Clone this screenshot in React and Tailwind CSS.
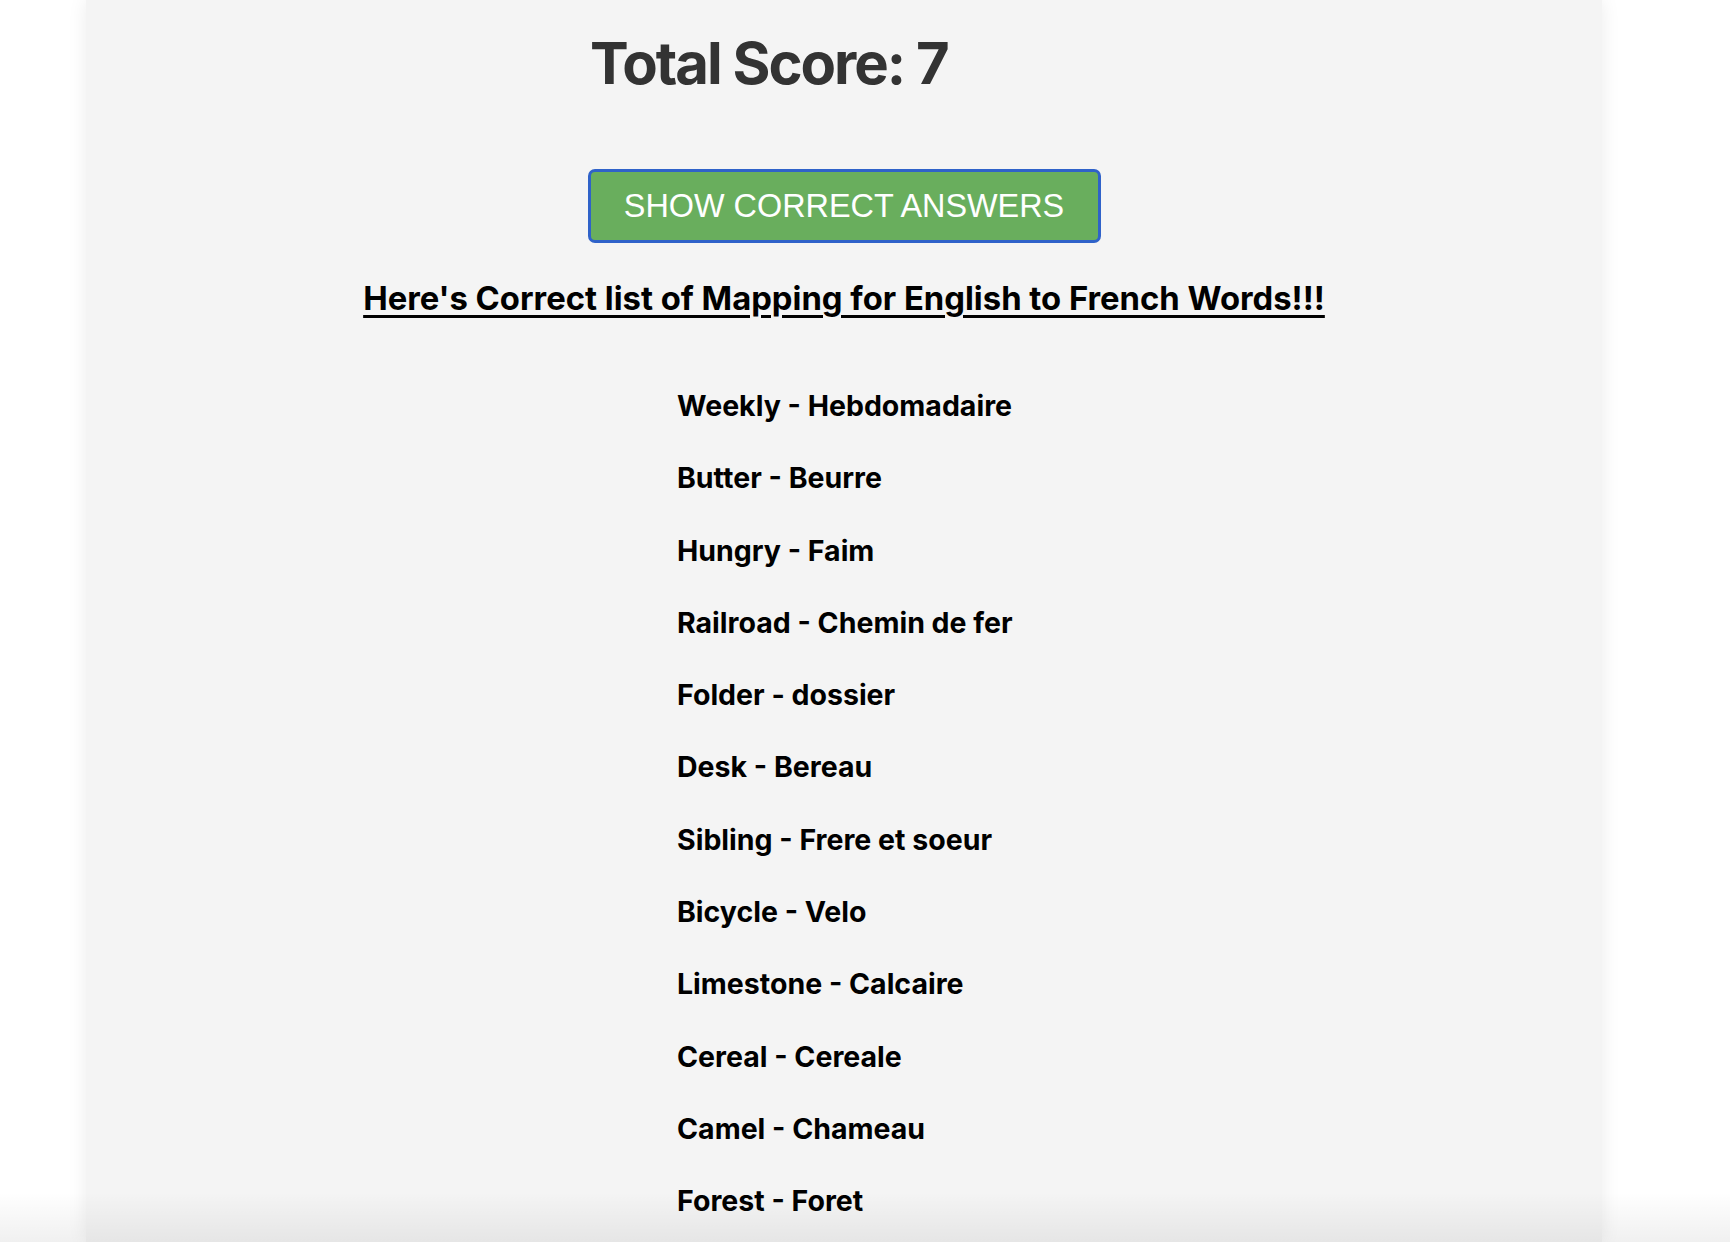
const pairs = [
  ["Weekly", "Hebdomadaire"],
  ["Butter", "Beurre"],
  ["Hungry", "Faim"],
  ["Railroad", "Chemin de fer"],
  ["Folder", "dossier"],
  ["Desk", "Bereau"],
  ["Sibling", "Frere et soeur"],
  ["Bicycle", "Velo"],
  ["Limestone", "Calcaire"],
  ["Cereal", "Cereale"],
  ["Camel", "Chameau"],
  ["Forest", "Foret"],
];

export default function App() {
  return (
    <div className="relative min-h-screen bg-white overflow-hidden font-['Inter',sans-serif]">
      <div className="ml-[86px] w-[1516px] min-h-[1242px] bg-[#f4f4f4] shadow-[0_0_18px_rgba(0,0,0,0.08)]">
        {/* SCORE */}
        <h2 className="pt-[27px] ml-[504px] text-[58px] leading-[72px] tracking-[-2px] font-bold text-[#333333]">
          Total Score: 7
        </h2>

        {/* BUTTON */}
        <div className="mt-[70px] flex justify-center">
          <button className="w-[513px] h-[74px] rounded-[7px] border-[3px] border-[#2f62c9] bg-[#69ae5d] text-white text-[32.4px] font-['Liberation_Sans',Arial,sans-serif]">
            SHOW CORRECT ANSWERS
          </button>
        </div>

        {/* MAPPING LIST */}
        <h3 className="mt-[35px] text-center text-[32.8px] leading-[40px] font-bold text-black underline underline-offset-[5px] decoration-[3px]">
          Here's Correct list of Mapping for English to French Words!!!
        </h3>

        <ul className="mt-[52px] pl-[591px]">
          {pairs.map(([en, fr]) => (
            <li key={en} className="text-[28.5px] leading-[72.3px] font-bold text-black">
              {en} - {fr}
            </li>
          ))}
        </ul>
      </div>

      {/* bottom fade */}
      <div className="pointer-events-none absolute left-0 right-0 bottom-0 h-[50px] bg-gradient-to-b from-transparent to-[rgba(0,0,0,0.06)]" />
    </div>
  );
}
